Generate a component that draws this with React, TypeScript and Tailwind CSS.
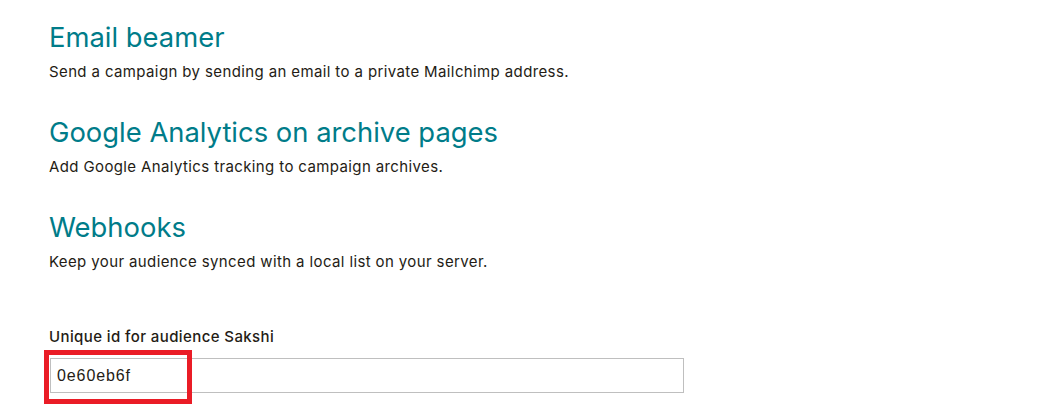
import React from "react";

type Integration = {
    title: string;
    description: string;
};

const integrations: Integration[] = [
    {
        title: "Email beamer",
        description:
            "Send a campaign by sending an email to a private Mailchimp address.",
    },
    {
        title: "Google Analytics on archive pages",
        description: "Add Google Analytics tracking to campaign archives.",
    },
    {
        title: "Webhooks",
        description: "Keep your audience synced with a local list on your server.",
    },
];

const App = () => {
    return (
        <div className="w-[1042px] h-[411px] overflow-hidden bg-white pl-[49px] pt-[19px] font-['Inter',sans-serif] text-[#241c15]">
            <div className="flex flex-col gap-[30px]">
                {integrations.map((item) => (
                    <div key={item.title} className="flex flex-col">
                        <h2 className="text-[27.4px] leading-[36px] font-normal text-[#007c89]">
                            {item.title}
                        </h2>
                        <p className="text-[15px] leading-[24px] tracking-[0.38px] mt-[5px]">
                            {item.description}
                        </p>
                    </div>
                ))}
            </div>

            <div className="mt-[53px] ml-[1px] w-[634px]">
                <div className="-ml-[1px] text-[15px] leading-[20px] font-medium tracking-[0.4px]">
                    Unique id for audience Sakshi
                </div>
                <div className="relative mt-[11px]">
                    <div className="flex items-center w-full h-[35px] border border-[#bfbfbf] pl-[6px] pt-[1px] text-[16px] tracking-[0.9px] font-['Liberation_Sans',Arial,sans-serif] text-[#241c15]">
                        0e60eb6f
                    </div>
                    <div className="absolute left-[-6px] top-[-8px] w-[148px] h-[54px] border-[5px] border-[#ea1c26] pointer-events-none" />
                </div>
            </div>
        </div>
    );
};

export default App;
